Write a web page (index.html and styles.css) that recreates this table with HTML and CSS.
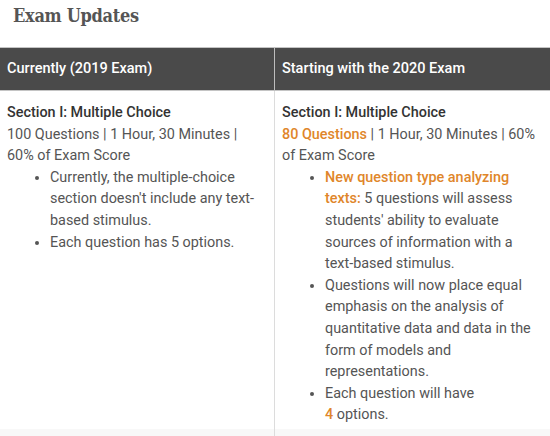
FILE: index.html
```html
<!DOCTYPE html>
<html>
<head>
<meta charset="utf-8">
<link rel="stylesheet" href="styles.css">
</head>
<body>
<h2 class="title">Exam Updates</h2>
<div class="table">
  <div class="th">Currently (2019 Exam)</div>
  <div class="th th-right">Starting with the 2020 Exam</div>
  <div class="td">
    <div class="sec">Section I: Multiple Choice</div>
    <div>100 Questions | 1 Hour, 30 Minutes | 60% of Exam Score</div>
    <ul class="list">
      <li>Currently, the multiple-choice section doesn't include any text-based stimulus.</li>
      <li>Each question has 5 options.</li>
    </ul>
  </div>
  <div class="td td-right">
    <div class="sec">Section I: Multiple Choice</div>
    <div><span class="hl">80 Questions</span> | 1 Hour, 30 Minutes | 60% of Exam Score</div>
    <ul class="list">
      <li><span class="hl">New question type analyzing texts:</span> 5 questions will assess students' ability to evaluate sources of information with a text-based stimulus.</li>
      <li>Questions will now place equal emphasis on the analysis of quantitative data and data in the form of models and representations.</li>
      <li>Each question will have <span class="nowrap"><span class="hl">4</span> options.</span></li>
    </ul>
  </div>
  <div class="tr-next"></div>
  <div class="tr-next td-right"></div>
</div>
</body>
</html>
```

FILE: styles.css
```css
html, body {
  margin: 0;
  padding: 0;
  background: #ffffff;
}
body {
  width: 550px;
  height: 436px;
  overflow: hidden;
  font-family: Roboto, "Liberation Sans", sans-serif;
  color: #555555;
}
.title {
  margin: 0;
  height: 47px;
  padding: 5px 0 0 13px;
  box-sizing: border-box;
  font-family: "DejaVu Serif", serif;
  font-stretch: condensed;
  font-weight: bold;
  font-size: 18px;
  letter-spacing: -0.3px;
  line-height: 22px;
  color: #555555;
}
.table {
  display: grid;
  grid-template-columns: 274px 1fr;
}
.th {
  background: #4a4a4a;
  color: #ffffff;
  font-weight: 500;
  font-size: 14.5px;
  height: 42px;
  line-height: 42px;
  padding-left: 7px;
  border-top: 1px solid #c4c4c4;
  border-bottom: 1px solid #c4c4c4;
}
.th-right {
  border-left: 1px solid #bdbdbd;
}
.td {
  padding: 11px 12px 10px 7px;
  font-size: 14.4px;
  line-height: 21.6px;
  height: 338px;
  box-sizing: border-box;
}
.td-right {
  border-left: 1px solid #dcdcdc;
}
.tr-next {
  height: 20px;
  background: #f8f8f8;
}
.sec {
  color: #333333;
  font-weight: 500;
}
.list {
  margin: 0;
  padding-left: 43px;
}
.list li::marker {
  color: #555555;
}
.hl {
  color: #e0862a;
  font-weight: 500;
}
.nowrap {
  white-space: nowrap;
}
```
